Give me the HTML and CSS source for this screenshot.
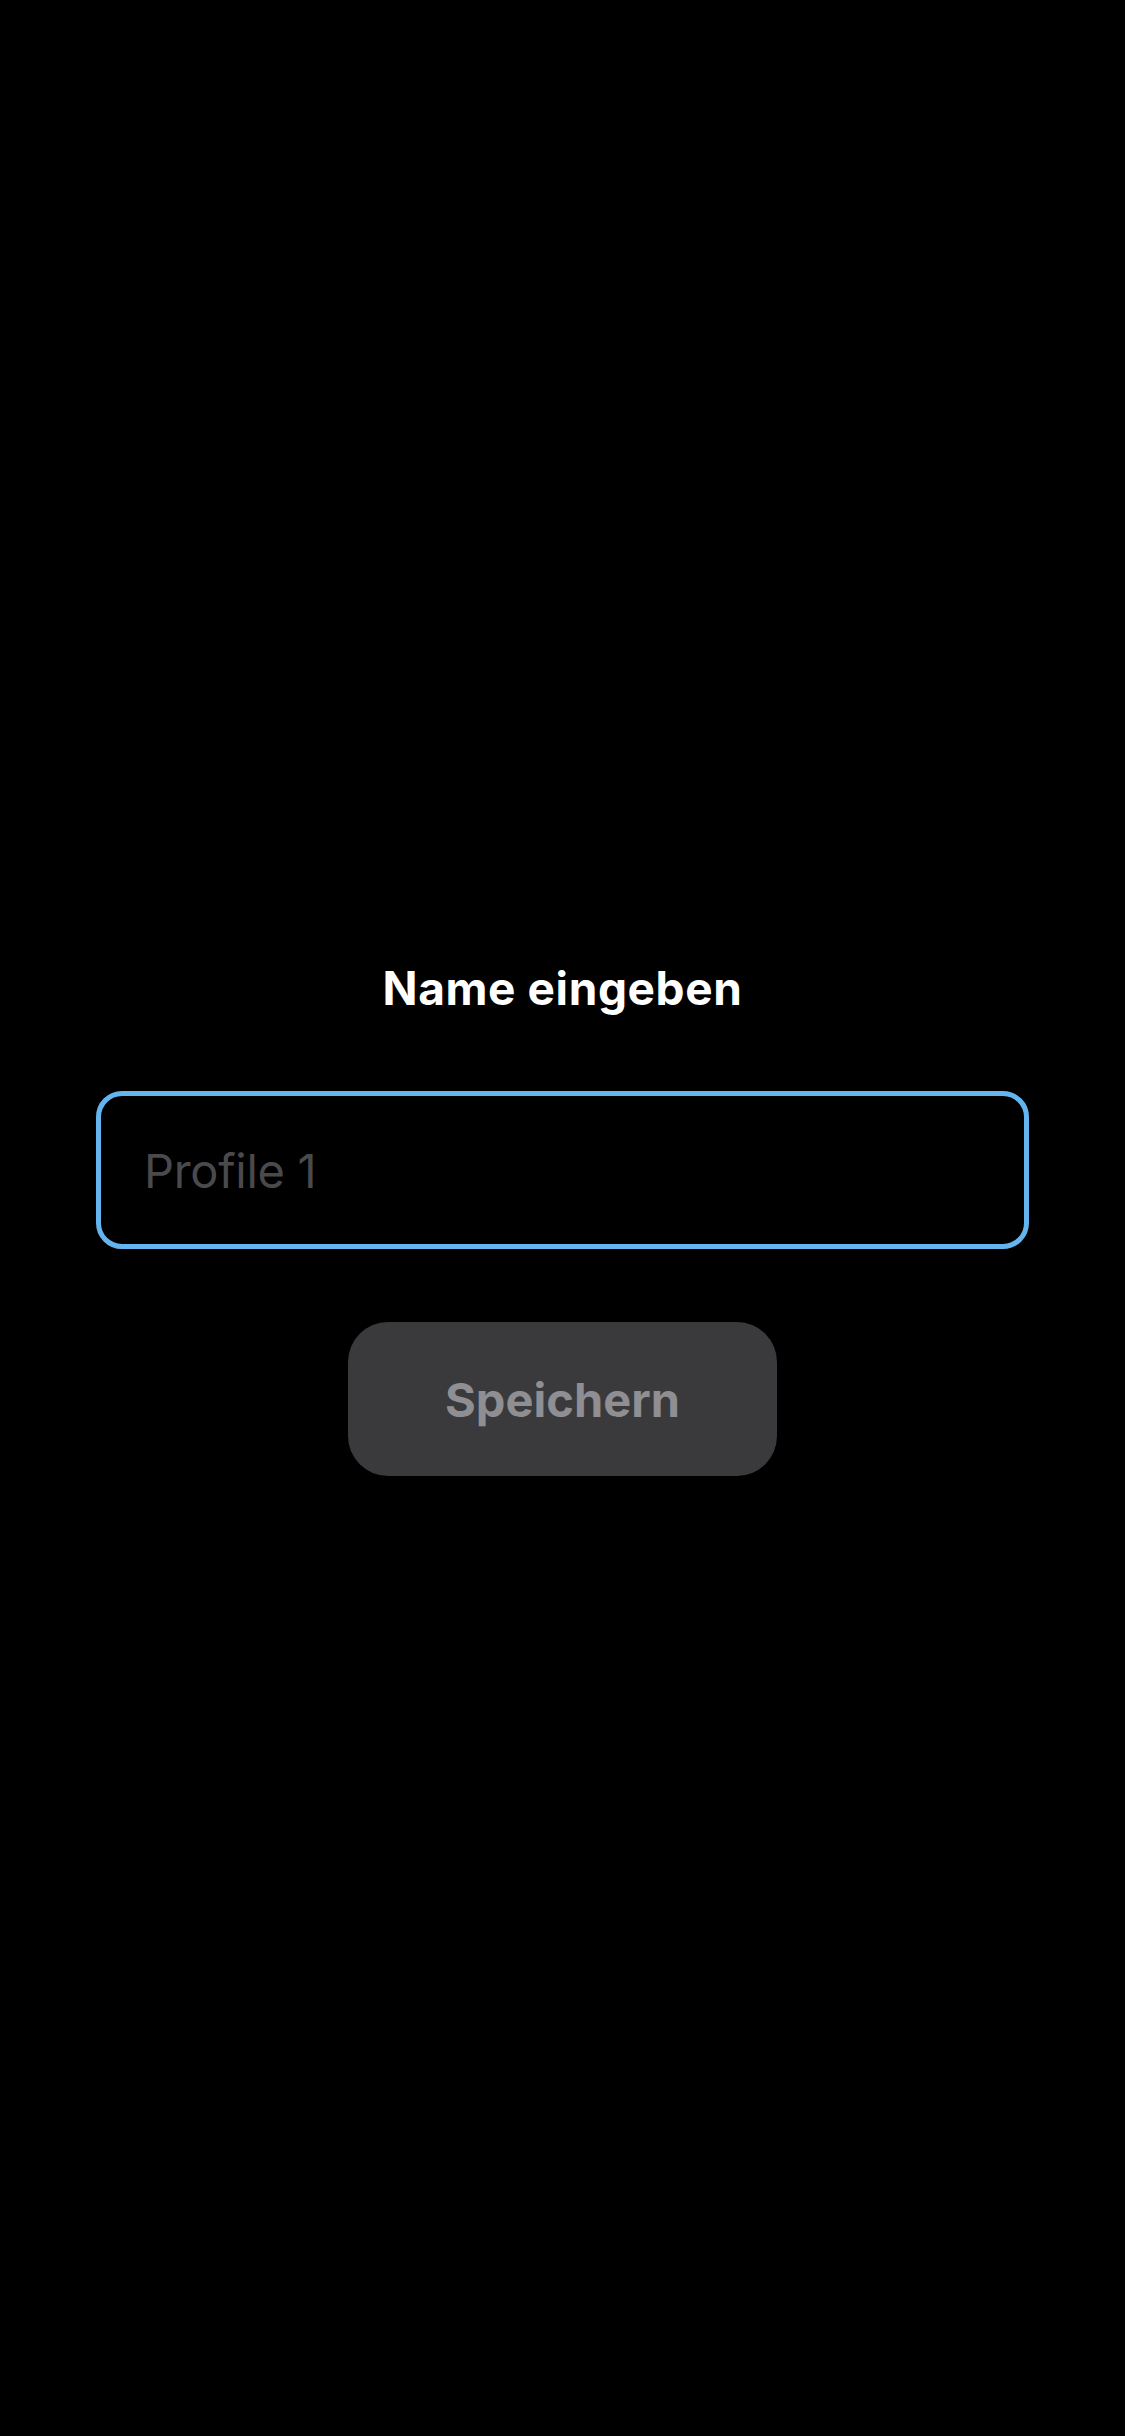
FILE: index.html
```html
<!DOCTYPE html>
<html lang="de">
<head>
<meta charset="utf-8">
<title>Name eingeben</title>
<link rel="stylesheet" href="styles.css">
</head>
<body>
<main class="screen">
  <h1 class="title">Name eingeben</h1>
  <div class="field"><span class="placeholder">Profile 1</span></div>
  <button class="save" type="button">Speichern</button>
</main>
</body>
</html>
```
FILE: styles.css
```css
html, body {
  margin: 0;
  padding: 0;
  background: #000;
  width: 1125px;
  height: 2436px;
  overflow: hidden;
}
.screen {
  display: flex;
  flex-direction: column;
  align-items: center;
  padding: 962px 96px 0;
  font-family: Inter, "Noto Sans", sans-serif;
}
.title {
  margin: 0;
  font-size: 46px;
  line-height: 52px;
  font-weight: 700;
  color: #fff;
  letter-spacing: 0.6px;
}
.field {
  box-sizing: border-box;
  margin-top: 77px;
  width: 933px;
  height: 158px;
  border: 5px solid #64b5ef;
  border-radius: 26px;
  display: flex;
  align-items: center;
  padding-left: 43px;
}
.placeholder {
  font-size: 47px;
  color: #4a4a4c;
  font-weight: 400;
  letter-spacing: -0.3px;
}
.save {
  margin-top: 73px;
  width: 429px;
  height: 154px;
  border: none;
  border-radius: 40px;
  background: #3a3a3c;
  color: #8e8e93;
  font-family: Inter, "Noto Sans", sans-serif;
  font-size: 47px;
  font-weight: 700;
  padding: 0;
}
```
